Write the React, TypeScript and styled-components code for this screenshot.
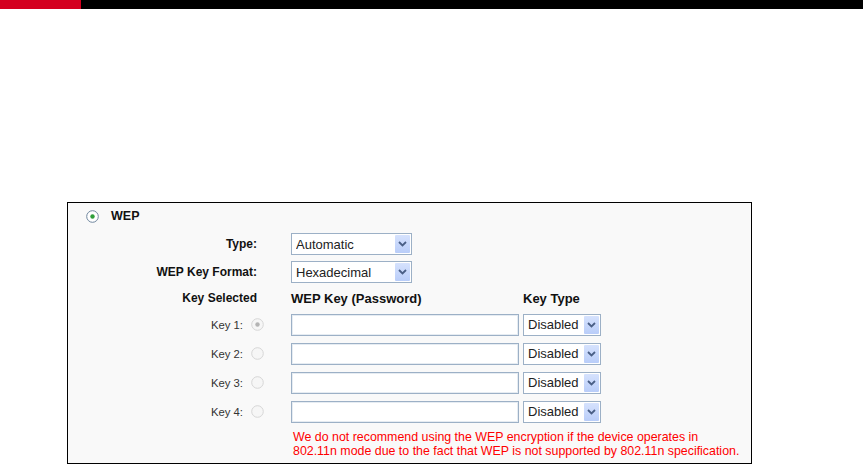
import React from "react";
import styled, { createGlobalStyle } from "styled-components";

const GlobalStyle = createGlobalStyle`
  html, body {
    margin: 0;
    padding: 0;
    background: #ffffff;
  }
  body {
    font-family: "Liberation Sans", Arial, sans-serif;
    font-size: 12px;
    color: #222;
  }
`;

const TopBar = styled.div`
  display: flex;
  height: 9px;
  background: #000;
`;

const RedTab = styled.div`
  width: 81px;
  background: #d4001f;
`;

const Page = styled.div`
  padding: 193px 0 0 67px;
`;

const Panel = styled.div`
  width: 683px;
  border: 1px solid #000;
  background: #f9f9f9;
  padding: 3px 0 5px;
`;

const TitleRow = styled.div`
  display: flex;
  align-items: center;
  gap: 12px;
  height: 20px;
  padding-left: 18px;
  margin-bottom: 4px;
  font-weight: bold;
  font-size: 12.5px;
  color: #111;
`;

const Row = styled.div<{ $h: number }>`
  display: flex;
  align-items: center;
  height: ${(p) => p.$h}px;
`;

const Label = styled.div<{ $bold?: boolean }>`
  width: 196px;
  box-sizing: border-box;
  display: flex;
  align-items: center;
  justify-content: flex-end;
  gap: 8px;
  padding-right: ${(p) => (p.$bold ? 7 : 0)}px;
  font-weight: ${(p) => (p.$bold ? "bold" : "normal")};
  font-size: ${(p) => (p.$bold ? 12 : 11.3)}px;
  color: ${(p) => (p.$bold ? "#111" : "#333")};
`;

const Head = styled.div<{ $w: number }>`
  width: ${(p) => p.$w}px;
  margin-left: ${(p) => (p.$w > 100 ? 27 : 4)}px;
  font-weight: bold;
  font-size: 13px;
  color: #111;
`;

const SelectWrap = styled.div<{ $w: number; $ml: number }>`
  position: relative;
  width: ${(p) => p.$w}px;
  height: 22px;
  margin-left: ${(p) => p.$ml}px;
`;

const Select = styled.select`
  appearance: none;
  -webkit-appearance: none;
  width: 100%;
  height: 100%;
  box-sizing: border-box;
  border: 1px solid #9cb0c6;
  border-radius: 0;
  background: #fff;
  padding: 0 0 0 4px;
  margin: 0;
  font-family: "Liberation Sans", Arial, sans-serif;
  font-size: 13px;
  color: #222;
  outline: none;
`;

const ArrowButton = styled.span`
  position: absolute;
  top: 2px;
  right: 2px;
  bottom: 2px;
  width: 15px;
  display: flex;
  align-items: center;
  justify-content: center;
  background: linear-gradient(#d6e2fd, #b9cdf9);
  border-radius: 1px;
  pointer-events: none;
`;

const KeyInput = styled.input`
  width: 228px;
  height: 22px;
  box-sizing: border-box;
  margin: 0 0 0 27px;
  border: 1px solid #9cb0c6;
  box-shadow: inset 0 0 0 1px #e6ecf2;
  background: #fff;
  outline: none;
`;

const Note = styled.div`
  margin: 4px 0 0 225px;
  color: #f00;
  font-size: 12.4px;
  line-height: 14px;
  white-space: nowrap;
`;

const Chevron = () => (
  <svg width="9" height="6" viewBox="0 0 9 6">
    <path d="M1 1 L4.5 4.5 L8 1" fill="none" stroke="#4a5f86" strokeWidth="1.8" />
  </svg>
);

type RadioKind = "on" | "lockedOn" | "off";

const Radio = ({ kind }: { kind: RadioKind }) => {
  const ring = kind === "on" ? "#6f869e" : "#d6d6d6";
  const fill = kind === "on" ? "#fff" : "#f6f6f6";
  return (
    <svg width="13" height="13" viewBox="0 0 13 13">
      <circle cx="6.5" cy="6.5" r="5.8" fill={fill} stroke={ring} strokeWidth="1" />
      {kind === "on" && <circle cx="6.5" cy="6.5" r="2.2" fill="#2f9e3a" />}
      {kind === "lockedOn" && <circle cx="6.5" cy="6.5" r="2.2" fill="#b4b4b4" />}
    </svg>
  );
};

const Dropdown = ({ value, w, ml }: { value: string; w: number; ml: number }) => (
  <SelectWrap $w={w} $ml={ml}>
    <Select defaultValue={value}>
      <option>{value}</option>
    </Select>
    <ArrowButton>
      <Chevron />
    </ArrowButton>
  </SelectWrap>
);

const keys = [1, 2, 3, 4];

export default function App() {
  return (
    <>
      <GlobalStyle />
      <TopBar>
        <RedTab />
      </TopBar>
      <Page>
        <Panel>
          <TitleRow>
            <Radio kind="on" />
            <span>WEP</span>
          </TitleRow>
          <Row $h={28}>
            <Label $bold>Type:</Label>
            <Dropdown value="Automatic" w={121} ml={27} />
          </Row>
          <Row $h={28}>
            <Label $bold>WEP Key Format:</Label>
            <Dropdown value="Hexadecimal" w={121} ml={27} />
          </Row>
          <Row $h={24}>
            <Label $bold>Key Selected</Label>
            <Head $w={228}>WEP Key (Password)</Head>
            <Head $w={78}>Key Type</Head>
          </Row>
          {keys.map((k) => (
            <Row $h={29} key={k}>
              <Label>
                <span>Key {k}:</span>
                <Radio kind={k === 1 ? "lockedOn" : "off"} />
              </Label>
              <KeyInput type="text" />
              <Dropdown value="Disabled" w={78} ml={4} />
            </Row>
          ))}
          <Note>
            We do not recommend using the WEP encryption if the device operates in
            <br />
            802.11n mode due to the fact that WEP is not supported by 802.11n specification.
          </Note>
        </Panel>
      </Page>
    </>
  );
}
